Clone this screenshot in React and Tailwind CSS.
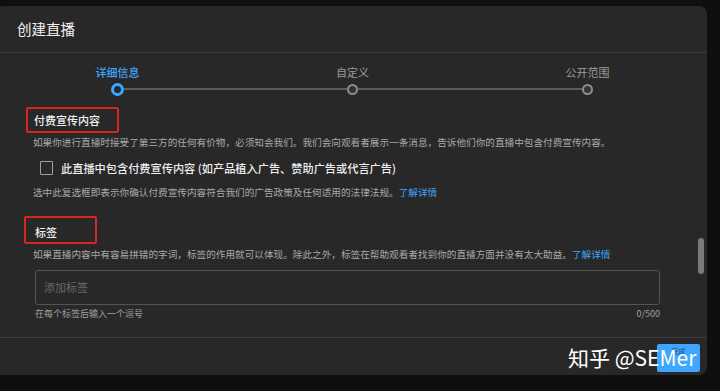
import React from "react";

const font = { fontFamily: '"Noto Sans CJK SC", "Noto Sans", sans-serif' };

function Step({ label, active, first, last }) {
  return (
    <div className="flex flex-col items-center">
      <div
        className={`h-[14px] leading-[14px] text-[11px] ${
          active ? "text-[#3ea6ff] font-medium" : "text-[#9a9a9a]"
        }`}
      >
        {label}
      </div>
      <div className="mt-[4px] flex h-[12px] w-full items-center">
        <div className={`h-[2px] flex-1 ${first ? "bg-transparent" : "bg-[#5c5c5c]"}`} />
        {active ? (
          <div className="h-[13px] w-[13px] rounded-full border-[3px] border-[#3ea6ff] bg-[#1e2a36]" />
        ) : (
          <div className="h-[11px] w-[11px] rounded-full border-[2.5px] border-[#8e8e8e] bg-[#333]" />
        )}
        <div className={`h-[2px] flex-1 ${last ? "bg-transparent" : "bg-[#5c5c5c]"}`} />
      </div>
    </div>
  );
}

export default function App() {
  return (
    <div className="relative h-[391px] w-[720px] overflow-hidden bg-[#0f0f0f] pt-[6px]" style={font}>
      <div className="flex h-[369px] w-[707px] flex-col rounded-r-[8px] rounded-l-[2px] bg-[#282828]">
        {/* header */}
        <div className="flex h-[47px] items-center border-b border-[#3c3c3c] pl-[17px]">
          <span className="text-[14.5px] text-[#f1f1f1]">创建直播</span>
        </div>

        {/* body */}
        <div className="relative h-[284px]">
          <div className="grid w-[705px] grid-cols-3 pt-[12px]">
            <Step label="详细信息" active first />
            <Step label="自定义" />
            <Step label="公开范围" last />
          </div>

          <div className="flex flex-col items-start pl-[33px]">
            <div className="-ml-[7px] mt-[12px] flex h-[26px] items-center rounded-[2px] border-2 border-[#d8261e] pl-[6px] pr-[17px]">
              <span className="text-[11px] font-medium leading-[14px] text-[#f1f1f1]">付费宣传内容</span>
            </div>
            <div className="mt-[2px] h-[14px] whitespace-nowrap text-[9.65px] leading-[14px] text-[#a8a8a8]">
              如果你进行直播时接受了第三方的任何有价物，必须知会我们。我们会向观看者展示一条消息，告诉他们你的直播中包含付费宣传内容。
            </div>
            <div className="ml-[7px] mt-[12px] flex h-[14px] items-center">
              <div className="h-[14px] w-[13px] rounded-[1px] border-[1.5px] border-[#a0a0a0]" />
              <span className="ml-[8px] whitespace-nowrap text-[11.2px] font-medium leading-[14px] text-[#eeeeee]">
                此直播中包含付费宣传内容 (如产品植入广告、赞助广告或代言广告)
              </span>
            </div>
            <div className="mt-[10px] h-[14px] whitespace-nowrap text-[9.65px] leading-[14px] text-[#a8a8a8]">
              选中此复选框即表示你确认付费宣传内容符合我们的广告政策及任何适用的法律法规。
              <span className="text-[#3ea6ff]">了解详情</span>
            </div>

            <div className="-ml-[9px] mt-[17px] h-[28px] rounded-[2px] border-2 border-[#d8261e] pb-[3px] pl-[9px] pr-[38px] pt-[7px]">
              <span className="block text-[11px] font-medium leading-[14px] text-[#f1f1f1]">标签</span>
            </div>
            <div className="mt-[3px] h-[14px] whitespace-nowrap text-[9.65px] leading-[14px] text-[#a8a8a8]">
              如果直播内容中有容易拼错的字词，标签的作用就可以体现。除此之外，标签在帮助观看者找到你的直播方面并没有太大助益。
              <span className="text-[#3ea6ff]">了解详情</span>
            </div>
            <div className="ml-[2px] mt-[9px] flex h-[35px] w-[625px] items-center rounded-[3px] border border-[#545454] pl-[8px]">
              <span className="text-[11px] text-[#6a6a6a]">添加标签</span>
            </div>
            <div className="ml-[2px] mt-[2px] flex h-[14px] w-[625px] items-center justify-between text-[9px] leading-[14px] text-[#a0a0a0]">
              <span>在每个标签后输入一个逗号</span>
              <span>0/500</span>
            </div>
          </div>

          {/* scrollbar */}
          <div className="absolute left-[698px] top-[185px] h-[36px] w-[6px] rounded-full bg-[#7a7a7a]" />
        </div>

        {/* footer */}
        <div className="flex flex-1 items-start justify-end border-t border-[#3c3c3c] pr-[7px] pt-[6px]">
          <div className="flex h-[28px] w-[43px] justify-center rounded-[2px] bg-[#3ea6ff] pt-[3px]">
            <span className="text-[7px] leading-[8px] text-[#1b4f80]">完成</span>
          </div>
        </div>
      </div>

      {/* watermark */}
      <div className="absolute left-[568px] top-[342px] whitespace-nowrap text-[21px] leading-[30px] text-white">
        知乎 @SEMer
      </div>
    </div>
  );
}
